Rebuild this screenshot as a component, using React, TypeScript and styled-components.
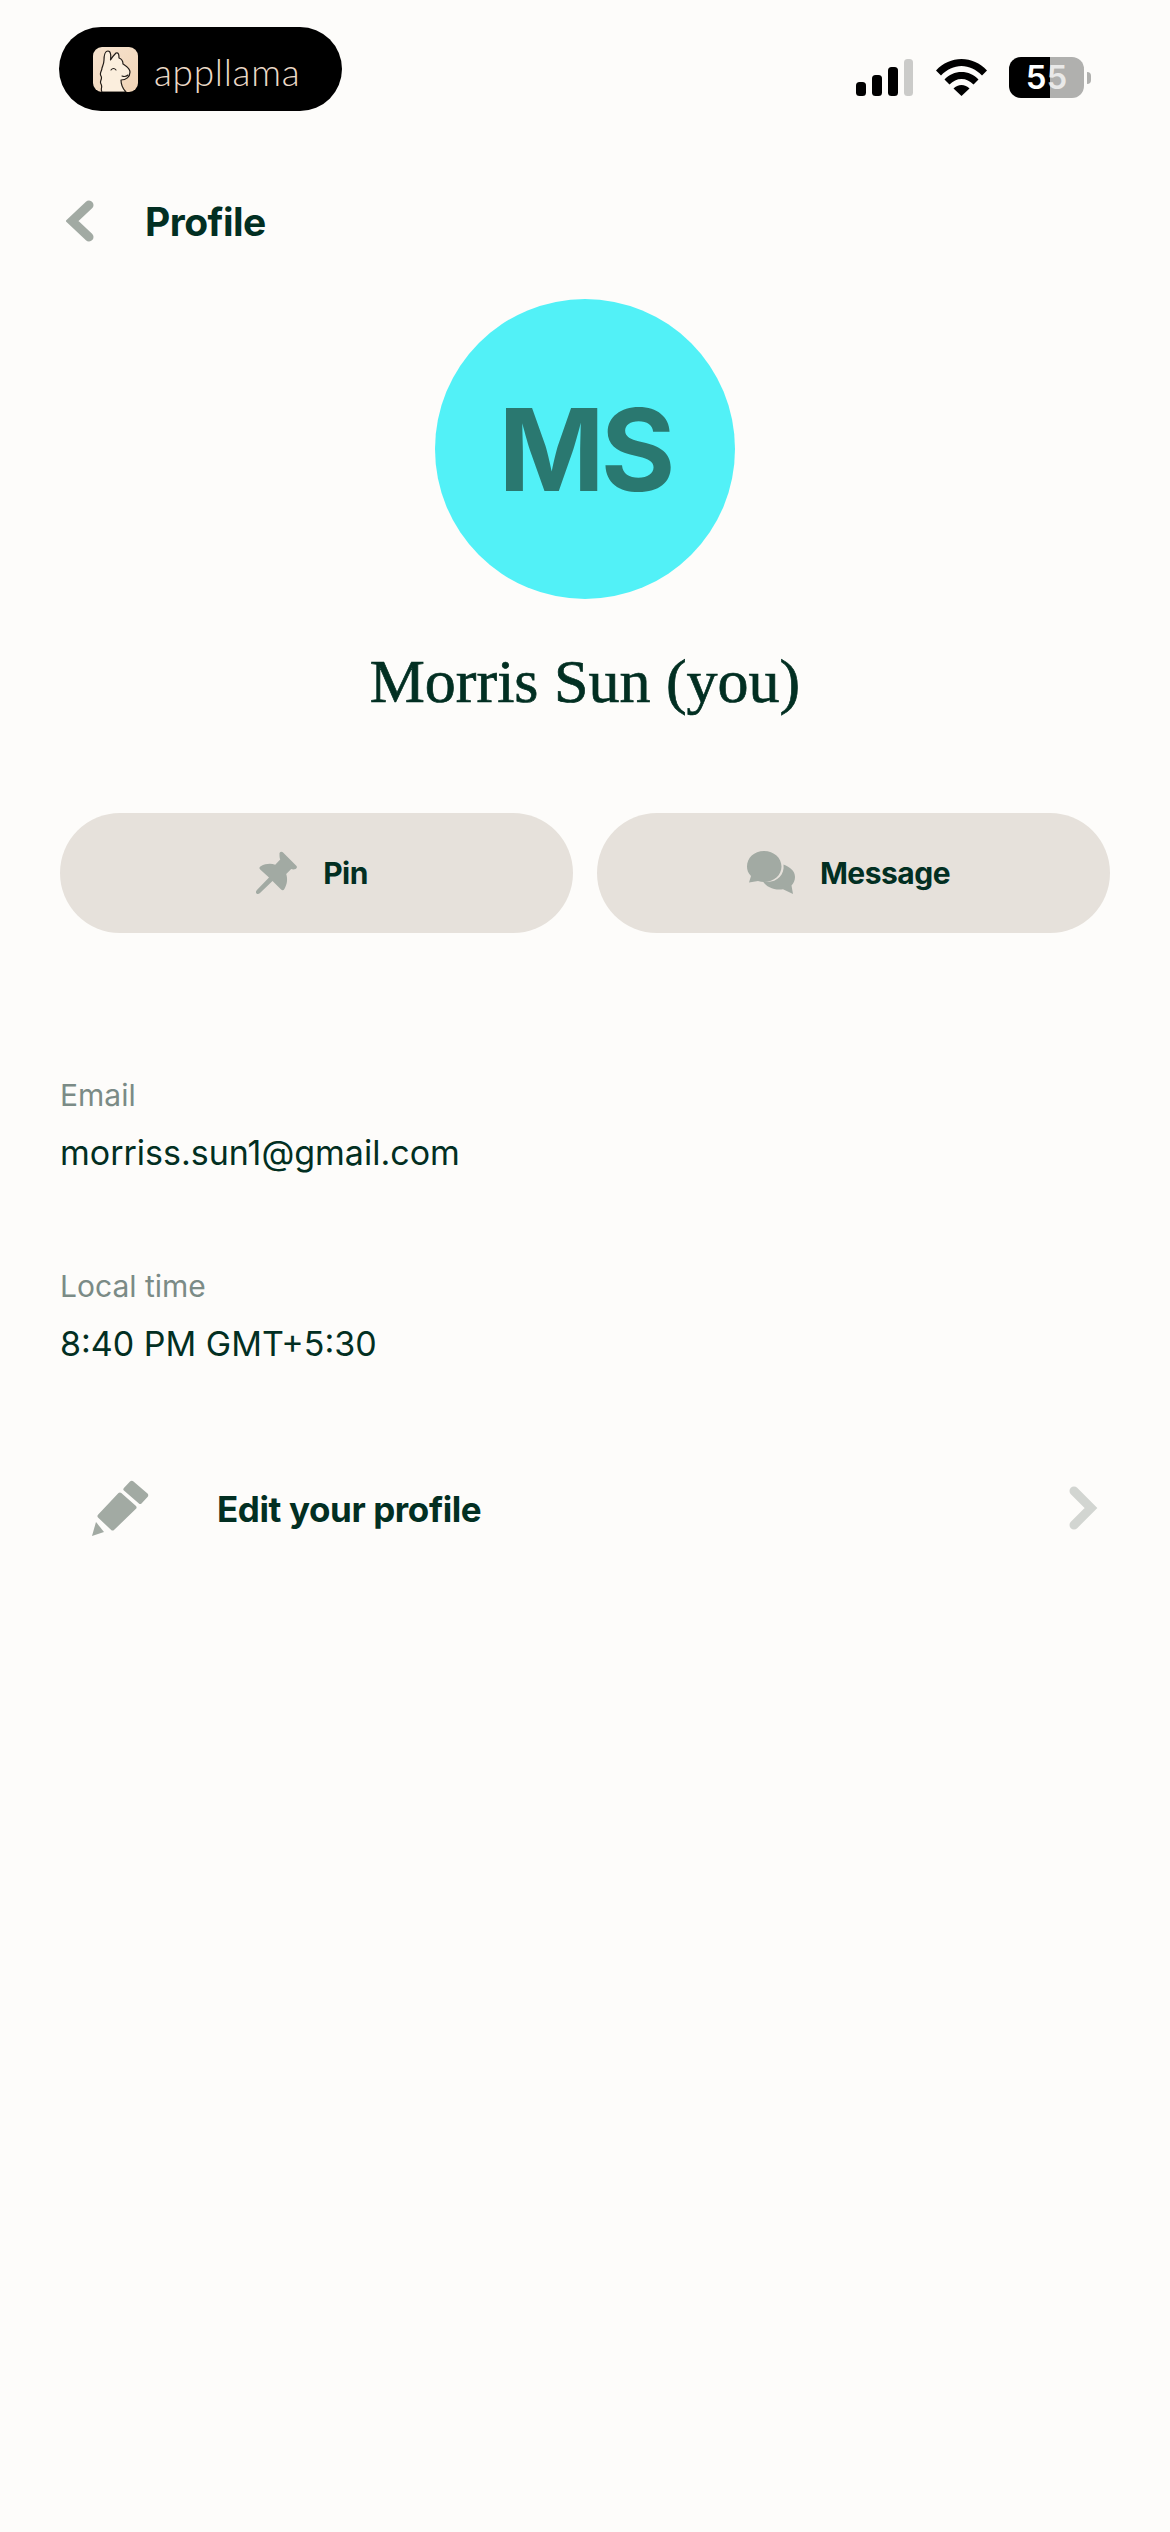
import React from 'react'
import styled, { createGlobalStyle } from 'styled-components'

const GlobalStyle = createGlobalStyle`
  html, body {
    margin: 0;
    padding: 0;
    background: #fdfcfa;
  }
`

const Screen = styled.div`
  width: 1170px;
  height: 2532px;
  overflow: hidden;
  background: #fdfcfa;
  color: #022f22;
  font-family: Inter, "Liberation Sans", sans-serif;
  display: flex;
  flex-direction: column;
`

const StatusBar = styled.div`
  display: flex;
  align-items: center;
  justify-content: space-between;
  padding: 27px 86px 0 59px;
  height: 84px;
`

const LogoPill = styled.div`
  width: 283px;
  height: 84px;
  box-sizing: border-box;
  padding-left: 34px;
  border-radius: 42px;
  background: #000;
  display: flex;
  align-items: center;
  gap: 16px;
`

const LogoText = styled.span`
  padding-top: 4px;
  font-family: Lato, sans-serif;
  font-weight: 300;
  font-size: 37px;
  line-height: 1;
  letter-spacing: 0.7px;
  color: #ecdac8;
`

const StatusIcons = styled.div`
  display: flex;
  align-items: center;
  margin-top: 17px;
`

const Battery = styled.div`
  position: relative;
  width: 75px;
  height: 41px;
  margin-left: 22px;
  border-radius: 12px;
  background: linear-gradient(90deg, #000 0 55%, #b0b0ae 55% 100%);
  color: #fff;
  font-family: Inter, sans-serif;
  font-weight: 600;
  font-size: 33px;
  line-height: 41px;
  text-align: center;

  &::after {
    content: '';
    position: absolute;
    left: 78px;
    top: 15px;
    width: 4px;
    height: 12px;
    border-radius: 0 6px 6px 0;
    background: #b0b0ae;
  }
`

const BatteryTail = styled.span`
  opacity: 0.72;
`

const Header = styled.div`
  display: flex;
  align-items: center;
  margin-top: 82px;
  padding-left: 66px;
  height: 56px;
`

const HeaderTitle = styled.h1`
  margin: 0 0 0 51px;
  font-size: 39px;
  line-height: 1;
  font-weight: 700;
  letter-spacing: -0.5px;
`

const Avatar = styled.div`
  align-self: center;
  margin-top: 50px;
  width: 300px;
  height: 300px;
  border-radius: 50%;
  background: #52f1f7;
  color: #2a7870;
  display: flex;
  align-items: center;
  justify-content: center;
  font-size: 114px;
  font-weight: 700;
  letter-spacing: -4px;
`

const Name = styled.h2`
  margin: 46px 0 0;
  text-align: center;
  font-family: "Liberation Serif", serif;
  font-weight: 400;
  font-size: 62px;
  line-height: 72px;
  -webkit-text-stroke: 0.7px #022f22;
`

const Actions = styled.div`
  display: grid;
  grid-template-columns: 1fr 1fr;
  gap: 24px;
  padding: 0 60px;
  margin-top: 96px;
`

const ActionButton = styled.button`
  height: 120px;
  border: 0;
  padding: 0 10px 0 0;
  border-radius: 60px;
  background: #e6e1db;
  color: #022f22;
  font-family: inherit;
  font-size: 30px;
  font-weight: 700;
  letter-spacing: -0.5px;
  display: flex;
  align-items: center;
  justify-content: center;
  gap: 24px;
`

const InfoBlock = styled.div`
  padding-left: 60px;
  margin-top: ${(p: { $top: number }) => p.$top}px;
`

const InfoLabel = styled.div`
  font-size: 30px;
  line-height: 40px;
  color: #7b8b86;
`

const InfoValue = styled.div`
  margin-top: 16px;
  font-size: 34px;
  line-height: 44px;
  color: #022f22;
`

const EditRow = styled.div`
  display: flex;
  align-items: center;
  margin-top: 112px;
  padding: 0 72px 0 92px;
  height: 60px;
`

const EditLabel = styled.span`
  margin-left: 67px;
  padding-top: 2px;
  flex: 1;
  font-size: 35px;
  font-weight: 700;
  letter-spacing: -0.4px;
`

const LlamaBadge = () => (
  <svg width="45" height="45" viewBox="0 0 45 45">
    <defs>
      <linearGradient id="badge" x1="0" y1="0" x2="1" y2="1">
        <stop offset="0" stopColor="#f6e3cf" />
        <stop offset="1" stopColor="#f1d4b6" />
      </linearGradient>
    </defs>
    <rect width="45" height="45" rx="9" fill="url(#badge)" />
    <path
      d="M9 45C7 42 10 40 8 37 6 34 10 32 8 29 6 26 9 24 9 21 10 18 11 16 11 13 11 9 12 4 15 4 18 4 18 9 17.500 13 19 10 21 8 23 6 26 5 26 9 26 11 29 12 30 15 30 17 33 19 37 21 37 25 37 30 33 33 28 33 28 38 30 42 33 45Z"
      fill="#fbeedd"
      stroke="#221c18"
      strokeWidth="1.2"
      strokeLinejoin="round"
    />
    <path d="M18 23c1.500-2 3.500-2 5 0M29 29c2 .8 4 .6 6-1" fill="none" stroke="#221c18" strokeWidth="1.100" strokeLinecap="round" />
  </svg>
)

const SignalIcon = () => (
  <svg width="57" height="37" viewBox="0 0 57 37">
    <rect x="0" y="23" width="10" height="14" rx="3.5" fill="#000" />
    <rect x="16" y="16" width="10" height="21" rx="3.5" fill="#000" />
    <rect x="32" y="8" width="10" height="29" rx="3.5" fill="#000" />
    <rect x="48" y="0" width="9" height="37" rx="3.5" fill="#cbcbc9" />
  </svg>
)

const WifiIcon = () => (
  <svg width="51" height="37" viewBox="0 0 51 37" style={{ marginLeft: 23 }}>
    <path d="M0 11.5C7 4 16 0 25.5 0S44 4 51 11.5l-5 5C40 10.500 33 7 25.500 7S11 10.500 5 16.500z" fill="#000" />
    <path d="M8.500 20.500C13 15.500 19 13 25.500 13s12.500 2.500 17 7.500l-5 5c-3.500-3.500-7.500-5.500-12-5.500s-8.500 2-12 5.500z" fill="#000" />
    <path d="M17.500 29.500c2.200-2.200 5-3.500 8-3.500s5.800 1.300 8 3.500l-8 7.500z" fill="#000" />
  </svg>
)

const BackIcon = () => (
  <svg width="28" height="42" viewBox="0 0 28 42">
    <path d="M23 5 6 21l17 16" fill="none" stroke="#a2aaa3" strokeWidth="9" strokeLinecap="round" strokeLinejoin="miter" />
  </svg>
)

const PinIcon = () => (
  <svg width="44" height="44" viewBox="0 0 44 44">
    <path
      d="M24.500 2c.8-1.500 2.300-1.700 3.300-.7l13.500 13.400c1 1 .8 2.500-.7 3.200-1.600.7-3.100.6-4.400 0l-5 5.100c1.500 4.500 1.200 9.800-1.800 15-.8 1.500-2.200 1.600-3.300.6L17.500 30 5 42c-1.200 1.100-2.600 1.200-3.500.4-.9-1-.7-2.300.4-3.500L14 26.500 5.200 18.500c-1.100-1.100-1-2.500.5-3.300 5-2.600 10-3.100 14.500-1.500l5-5.100c-.8-2-.7-4.500-.7-6.600z"
      fill="#a2aaa3"
    />
  </svg>
)

const ChatIcon = () => (
  <svg width="49" height="44" viewBox="0 0 49 44">
    <path d="M17 0C27 0 34.500 7 34.500 15.500 34.500 24 27 31 17 31 15 31 13 30.700 11 30L2 31.500 4 25C1 22 0 19 0 15.500 0 7 7 0 17 0z" fill="#a2aaa3" />
    <path d="M36.500 13.500C43 16 48 20 48 26 48 29.500 46.500 32.500 44.500 34.500L46 43 36 38.300C27 39.500 19.500 36 16 30.500 28 33 38 25 36.500 13.500z" fill="#a2aaa3" />
  </svg>
)

const PencilIcon = () => (
  <svg width="58" height="56" viewBox="0 0 58 56">
    <path d="M38 1.500c1-1 2.500-1 3.500 0l14 12c1 1 1 2.500 0 3.500l-6 6.500c-.8.800-1.800.800-2.600 0l-15-13c-.8-.8-.8-1.800 0-2.600z" fill="#a2aaa3" />
    <path d="M26.500 13c.8-.8 2-.8 2.800 0L44 26c.8.800.8 2 0 2.800L22 50c-.8.800-2 .8-2.800 0L6 37.500c-.8-.8-.8-2 0-2.800z" fill="#a2aaa3" />
    <path d="M4 42 12 52 0 56z" fill="#a2aaa3" />
  </svg>
)

const ForwardIcon = () => (
  <svg width="30" height="44" viewBox="0 0 30 44">
    <path d="M6 5l17 17-17 17" fill="none" stroke="#d2d5d1" strokeWidth="9" strokeLinecap="round" />
  </svg>
)

export default function App() {
  return (
    <Screen>
      <GlobalStyle />
      <StatusBar>
        <LogoPill>
          <LlamaBadge />
          <LogoText>appllama</LogoText>
        </LogoPill>
        <StatusIcons>
          <SignalIcon />
          <WifiIcon />
          <Battery>
            5<BatteryTail>5</BatteryTail>
          </Battery>
        </StatusIcons>
      </StatusBar>

      <Header>
        <BackIcon />
        <HeaderTitle>Profile</HeaderTitle>
      </Header>

      <Avatar>MS</Avatar>
      <Name>Morris Sun (you)</Name>

      <Actions>
        <ActionButton>
          <PinIcon />
          Pin
        </ActionButton>
        <ActionButton>
          <ChatIcon />
          Message
        </ActionButton>
      </Actions>

      <InfoBlock $top={142}>
        <InfoLabel>Email</InfoLabel>
        <InfoValue>morriss.sun1@gmail.com</InfoValue>
      </InfoBlock>

      <InfoBlock $top={91}>
        <InfoLabel>Local time</InfoLabel>
        <InfoValue>8:40 PM GMT+5:30</InfoValue>
      </InfoBlock>

      <EditRow>
        <PencilIcon />
        <EditLabel>Edit your profile</EditLabel>
        <ForwardIcon />
      </EditRow>
    </Screen>
  )
}
